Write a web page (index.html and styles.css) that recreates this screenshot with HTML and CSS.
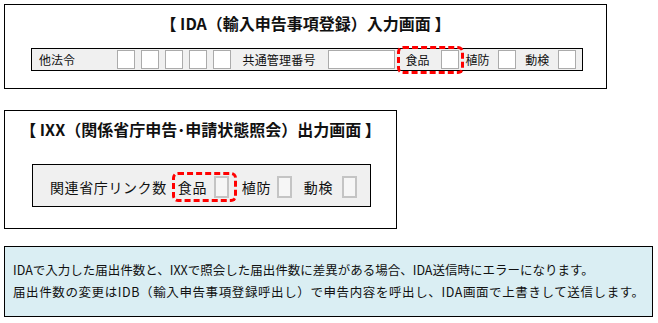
FILE: index.html
```html
<!DOCTYPE html>
<html lang="ja">
<head>
    <meta charset="UTF-8">
    <meta name="viewport" content="width=device-width, initial-scale=1.0">
    <title>IDA / IXX 画面</title>
    <link rel="stylesheet" href="styles.css">
</head>
<body>
    <div class="panel panel-ida">
        <h2 class="panel-title">【 IDA（輸入申告事項登録）入力画面 】</h2>
        <div class="bar bar-ida">
            <span class="lbl lbl-other">他法令</span>
            <span class="box"></span>
            <span class="box"></span>
            <span class="box"></span>
            <span class="box"></span>
            <span class="box last"></span>
            <span class="lbl lbl-num">共通管理番号</span>
            <span class="field"></span>
            <div class="mark">
                <span class="lbl">食品</span>
                <span class="box"></span>
            </div>
            <span class="lbl lbl-short">植防</span>
            <span class="box gap"></span>
            <span class="lbl lbl-short">動検</span>
            <span class="box"></span>
        </div>
    </div>

    <div class="panel panel-ixx">
        <h2 class="panel-title">【 IXX（関係省庁申告･申請状態照会）出力画面 】</h2>
        <div class="bar bar-ixx">
            <span class="lbl">関連省庁リンク数</span>
            <div class="mark">
                <span class="lbl">食品</span>
                <span class="cell"></span>
            </div>
            <span class="lbl lbl-short">植防</span>
            <span class="cell"></span>
            <span class="lbl lbl-short">動検</span>
            <span class="cell"></span>
        </div>
    </div>

    <div class="note">
        <p>IDAで入力した届出件数と、IXXで照会した届出件数に差異がある場合、IDA送信時にエラーになります。</p>
        <p class="wide">届出件数の変更はIDB（輸入申告事項登録呼出し）で申告内容を呼出し、IDA画面で上書きして送信します。</p>
    </div>
</body>
</html>
```

FILE: styles.css
```css
* {
    margin: 0;
    padding: 0;
    box-sizing: border-box;
}

body {
    background: #ffffff;
    color: #111;
    font-family: "Noto Sans CJK JP", "Noto Sans", sans-serif;
    padding: 4px 0 0 4px;
}

.panel {
    border: 1px solid #000;
    background: #fff;
}

.panel-ida {
    width: 603px;
    height: 85px;
}

.panel-ixx {
    width: 393px;
    height: 119px;
    margin-top: 21px;
}

.panel-title {
    font-size: 16px;
    font-weight: bold;
    line-height: 20px;
    text-align: center;
    margin-top: 8px;
    color: #111;
}

.bar {
    display: flex;
    align-items: center;
    border: 1px solid #000;
    background: #f0f0f0;
}

.bar-ida {
    width: 552px;
    height: 23px;
    margin: 15px 0 0 26px;
    padding-left: 7px;
    font-size: 12px;
}

.bar-ixx {
    width: 339px;
    height: 43px;
    margin: 25px 0 0 27px;
    padding: 3px 0 0 17px;
    font-size: 14px;
    letter-spacing: 0.6px;
}

.lbl {
    white-space: nowrap;
    line-height: 1;
}

.lbl-other {
    width: 79px;
}

.lbl-num {
    width: 86px;
    margin-left: 11px;
    letter-spacing: 0.2px;
}

.box {
    width: 18px;
    height: 19px;
    background: #fff;
    border: 1px solid #ababab;
    margin-right: 6px;
    flex-shrink: 0;
}

.box.last {
    margin-right: 0;
}

.field {
    width: 68px;
    height: 19px;
    background: #fff;
    border: 1px solid #ababab;
}

.mark {
    display: flex;
    align-items: center;
    border: 3px dashed #ff0000;
    border-radius: 6px;
    flex-shrink: 0;
}

.bar-ida .mark {
    height: 28px;
    margin-left: 2px;
    padding: 0 2px 0 5px;
}

.bar-ida .mark .lbl {
    width: 36px;
}

.bar-ida .mark .box {
    margin-right: 0;
}

.bar-ida .lbl-short {
    width: 33px;
    margin-left: 1px;
}

.bar-ida .box.gap {
    margin-right: 8px;
}

.bar-ixx .mark {
    height: 30px;
    margin-left: 5px;
    padding: 0 5px 0 3px;
}

.bar-ixx .mark .lbl {
    width: 36px;
}

.cell {
    width: 15px;
    height: 22px;
    background: #f6f6f6;
    border: 2px solid #c4c4c4;
    flex-shrink: 0;
}

.bar-ixx .lbl-short {
    margin-left: 5px;
    width: 35px;
}

.bar-ixx .cell + .lbl-short {
    margin-left: 12px;
    width: 38px;
}

.note {
    width: 649px;
    height: 71px;
    margin-top: 17px;
    border: 1px solid #000;
    background: #daeef3;
    padding: 12px 0 0 8px;
    font-size: 12.5px;
    line-height: 22px;
    color: #111;
}

.note .wide {
    letter-spacing: 0.6px;
}
```
